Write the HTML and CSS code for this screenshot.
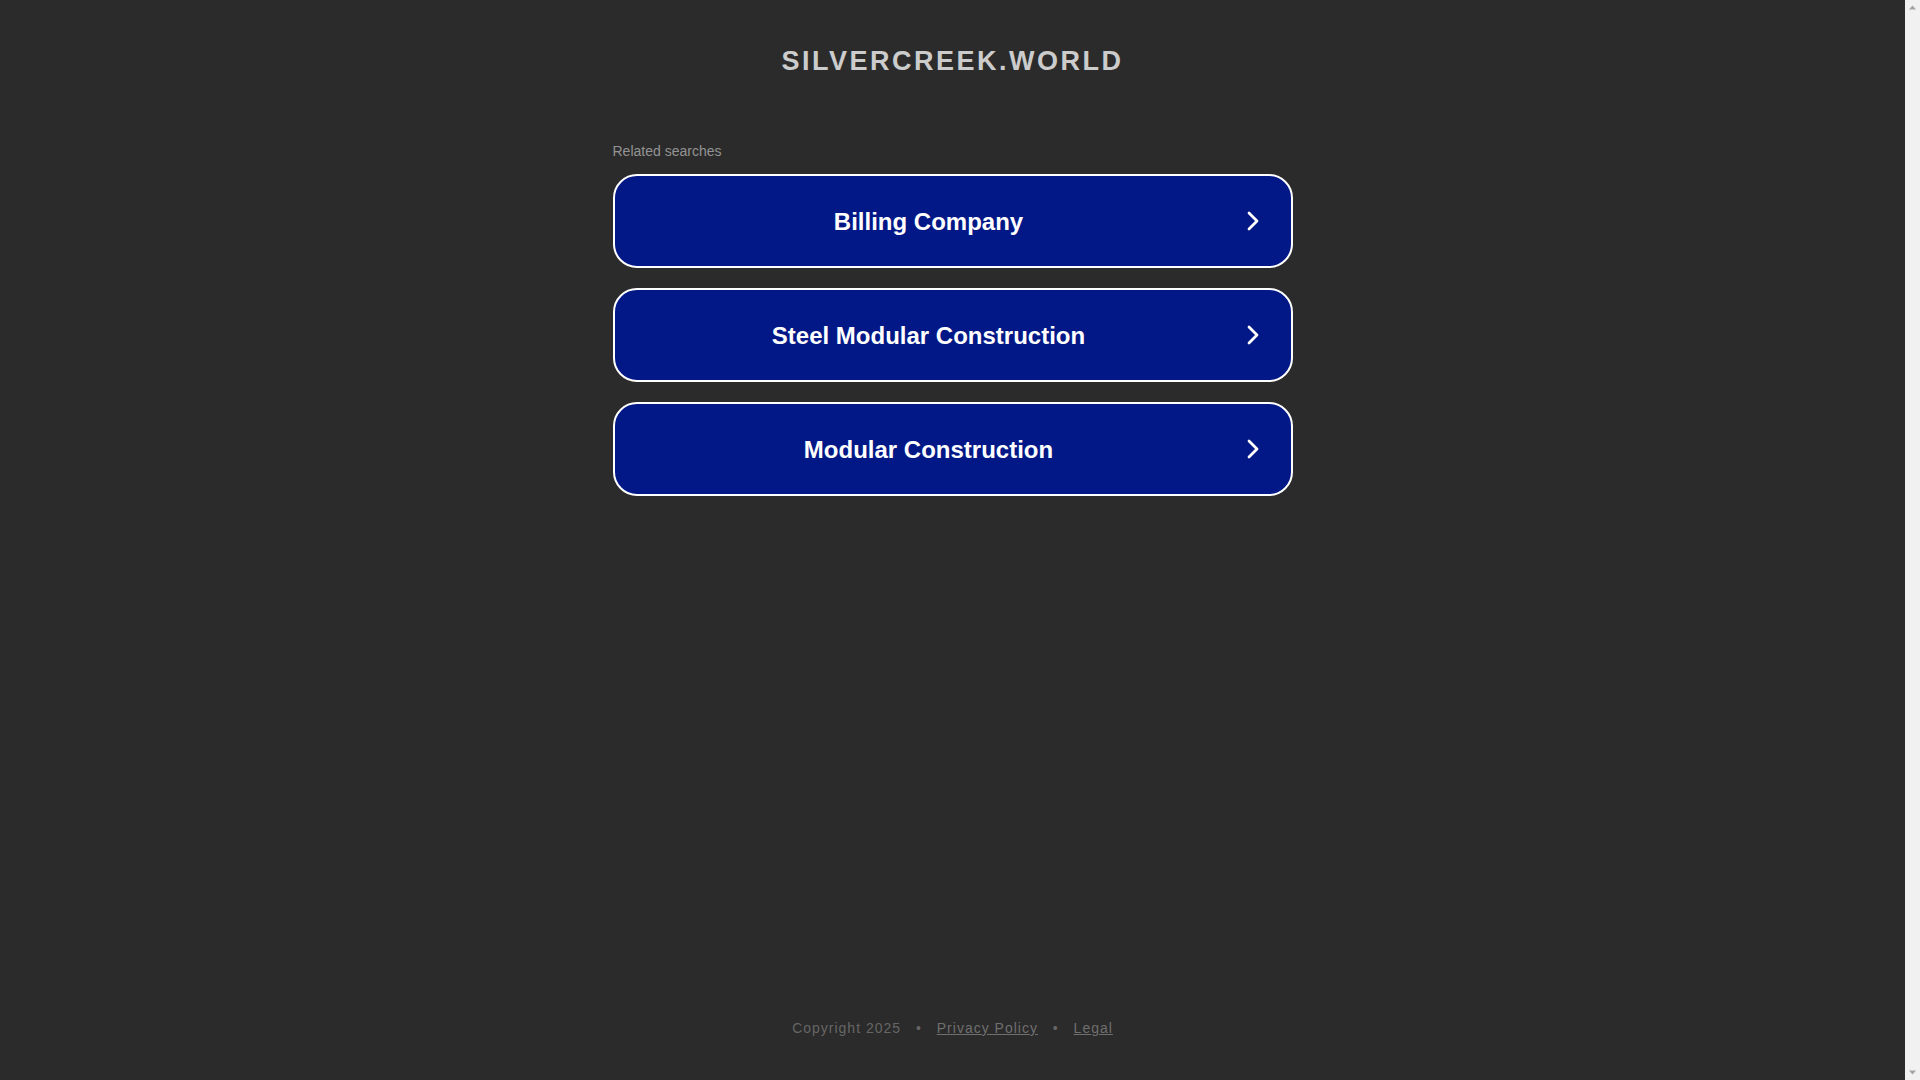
FILE: index.html
```html
<!DOCTYPE html>
<html lang="en">
<head>
<meta charset="utf-8">
<title>silvercreek.world</title>
<link rel="stylesheet" href="styles.css">
</head>
<body>
<div class="frame">
<div class="page">
  <header class="header">
    <h1 class="domain">SILVERCREEK.WORLD</h1>
  </header>
  <main class="main">
    <div class="label">Related searches</div>
    <div class="list">
      <a class="search" href="#">
        <span class="search-text">Billing Company</span>
        <span class="search-arrow"><svg width="14" height="20" viewBox="0 0 14 20"><path d="M3 2 L11 10 L3 18" fill="none" stroke="#fff" stroke-width="2.8" stroke-linecap="round" stroke-linejoin="round"/></svg></span>
      </a>
      <a class="search" href="#">
        <span class="search-text">Steel Modular Construction</span>
        <span class="search-arrow"><svg width="14" height="20" viewBox="0 0 14 20"><path d="M3 2 L11 10 L3 18" fill="none" stroke="#fff" stroke-width="2.8" stroke-linecap="round" stroke-linejoin="round"/></svg></span>
      </a>
      <a class="search" href="#">
        <span class="search-text">Modular Construction</span>
        <span class="search-arrow"><svg width="14" height="20" viewBox="0 0 14 20"><path d="M3 2 L11 10 L3 18" fill="none" stroke="#fff" stroke-width="2.8" stroke-linecap="round" stroke-linejoin="round"/></svg></span>
      </a>
    </div>
  </main>
  <footer class="footer">
    <span class="copy">Copyright 2025</span>
    <span class="sep">•</span>
    <a class="flink" href="#">Privacy Policy</a>
    <span class="sep">•</span>
    <a class="flink" href="#">Legal</a>
  </footer>
</div>
<div class="scrollbar">
  <svg class="sb-arrow" width="15" height="15" viewBox="0 0 15 15"><path d="M4 9.5 L7.5 5.5 L11 9.5 Z" fill="#a3a3a3"/></svg>
  <div class="sb-track"></div>
  <svg class="sb-arrow" width="15" height="15" viewBox="0 0 15 15"><path d="M4 5.5 L7.5 9.5 L11 5.5 Z" fill="#a3a3a3"/></svg>
</div>
</div>
</body>
</html>
```
FILE: styles.css
```css
body {
  margin: 0;
  background: #2b2b2b;
  font-family: "Liberation Sans", Arial, sans-serif;
  overflow: hidden;
}
.frame {
  display: flex;
  height: 100vh;
}
.page {
  flex: 1;
  display: flex;
  flex-direction: column;
}
.scrollbar {
  width: 15px;
  background: #f1f1f1;
  display: flex;
  flex-direction: column;
}
.sb-arrow {
  display: block;
}
.sb-track {
  flex: 1;
}
.header {
  padding-top: 46px;
  text-align: center;
}
.domain {
  margin: 0;
  font-size: 27px;
  line-height: 31px;
  font-weight: bold;
  letter-spacing: 2.5px;
  color: #cccccc;
}
.main {
  width: 680px;
  margin: 0 auto;
  padding-top: 66px;
}
.label {
  font-size: 14px;
  line-height: 16px;
  color: #939393;
  margin-bottom: 15px;
}
.list {
  display: flex;
  flex-direction: column;
  gap: 20px;
}
.search {
  box-sizing: border-box;
  height: 94px;
  display: flex;
  align-items: center;
  background: #021886;
  border: 2px solid #ffffff;
  border-radius: 24px;
  padding: 0 28px 0 0;
  text-decoration: none;
  color: #ffffff;
}
.search-text {
  flex: 1;
  text-align: center;
  font-size: 24px;
  font-weight: bold;
  line-height: 28px;
  padding-top: 2px;
}
.search-arrow {
  width: 20px;
  display: flex;
  justify-content: center;
  align-items: center;
}
.search-arrow svg {
  display: block;
}
.footer {
  margin-top: auto;
  padding-bottom: 44px;
  text-align: center;
  font-size: 14px;
  line-height: 16px;
  letter-spacing: 1px;
  color: #666666;
}
.sep {
  margin: 0 10px;
}
.flink {
  color: #6f6f6f;
  text-decoration: underline;
}
```
